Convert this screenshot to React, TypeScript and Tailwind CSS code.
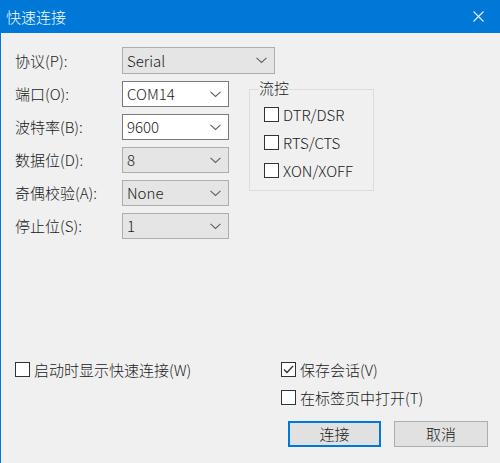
import React from 'react';

const FONT = '"Noto Sans CJK SC", "Noto Sans", sans-serif';

// Small chevron used by the combo boxes
function Chevron() {
  return (
    <svg width="11" height="7" viewBox="0 0 11 7" className="shrink-0">
      <polyline points="0.5,0.8 5.5,5.5 10.5,0.8" fill="none" stroke="#606060" strokeWidth="1.1" />
    </svg>
  );
}

function Combo({ value, width, editable }: { value: string; width: string; editable?: boolean }) {
  return (
    <div
      className={`flex h-full items-center justify-between pl-[4px] pr-[7px] border ${width} ${
        editable ? 'bg-white border-[#7a7a7a]' : 'bg-[#e5e5e5] border-[#adadad]'
      }`}
    >
      <span className="leading-[20px]">{value}</span>
      <Chevron />
    </div>
  );
}

function CheckBox({ label, checked }: { label: string; checked?: boolean }) {
  return (
    <div className="flex h-[15px] items-center">
      <span className="flex h-[15px] w-[15px] shrink-0 items-center justify-center border border-[#333333] bg-white">
        {checked && (
          <svg width="13" height="13" viewBox="0 0 13 13">
            <polyline points="2,6.5 5,9.5 11,3" fill="none" stroke="#333333" strokeWidth="1.3" />
          </svg>
        )}
      </span>
      <span className="ml-[4px] whitespace-nowrap leading-[20px]">{label}</span>
    </div>
  );
}

export default function App() {
  const rows = [
    { label: '端口(O):', value: 'COM14', editable: true },
    { label: '波特率(B):', value: '9600', editable: true },
    { label: '数据位(D):', value: '8' },
    { label: '奇偶校验(A):', value: 'None' },
    { label: '停止位(S):', value: '1' },
  ];

  return (
    <div
      className="flex h-[463px] w-[500px] flex-col overflow-hidden border-l border-[#0078d7] bg-[#f0f0f0] text-[15px] font-light text-[#1a1a1a]"
      style={{ fontFamily: FONT }}
    >
      {/* Title bar */}
      <div className="flex h-[33px] shrink-0 items-center justify-between bg-[#0078d7] pl-[5px] pr-[16px] text-white">
        <span className="leading-[20px]">快速连接</span>
        <svg width="11" height="11" viewBox="0 0 11 11">
          <line x1="0.5" y1="0.5" x2="10.5" y2="10.5" stroke="#e8f1fb" strokeWidth="1.1" />
          <line x1="10.5" y1="0.5" x2="0.5" y2="10.5" stroke="#e8f1fb" strokeWidth="1.1" />
        </svg>
      </div>

      {/* Body */}
      <div className="flex flex-1 flex-col pl-[14px] pt-[14px] pb-[16px]">
        <div className="flex h-[27px] items-center">
          <span className="w-[107px] leading-[20px]">协议(P):</span>
          <Combo value="Serial" width="w-[153px]" />
        </div>

        <div className="mt-[7px] flex">
          <div className="flex flex-col gap-[7px]">
            {rows.map((r) => (
              <div key={r.label} className="flex h-[26px] items-center">
                <span className="w-[107px] leading-[20px]">{r.label}</span>
                <Combo value={r.value} width="w-[107px]" editable={r.editable} />
              </div>
            ))}
          </div>

          {/* Flow control group */}
          <div className="relative ml-[20px] mt-[8px] h-[102px] w-[125px] border border-[#dcdcdc] pl-[14px] pt-[17px]">
            <span className="absolute -top-[12px] left-[9px] bg-[#f0f0f0] leading-[20px]">流控</span>
            <div className="flex flex-col gap-[13px]">
              <CheckBox label="DTR/DSR" />
              <CheckBox label="RTS/CTS" />
              <CheckBox label="XON/XOFF" />
            </div>
          </div>
        </div>

        <div className="flex-1" />

        {/* Bottom options */}
        <div className="flex">
          <div className="w-[266px]">
            <CheckBox label="启动时显示快速连接(W)" />
          </div>
          <CheckBox label="保存会话(V)" checked />
        </div>
        <div className="mt-[13px] flex">
          <div className="w-[266px]" />
          <CheckBox label="在标签页中打开(T)" />
        </div>

        <div className="mt-[16px] flex justify-end gap-[13px] pr-[12px]">
          <button className="h-[26px] w-[93px] border-2 border-[#0078d7] bg-[#e1e1e1] leading-[20px]">连接</button>
          <button className="h-[26px] w-[94px] border border-[#adadad] bg-[#e1e1e1] leading-[20px]">取消</button>
        </div>
      </div>
    </div>
  );
}
